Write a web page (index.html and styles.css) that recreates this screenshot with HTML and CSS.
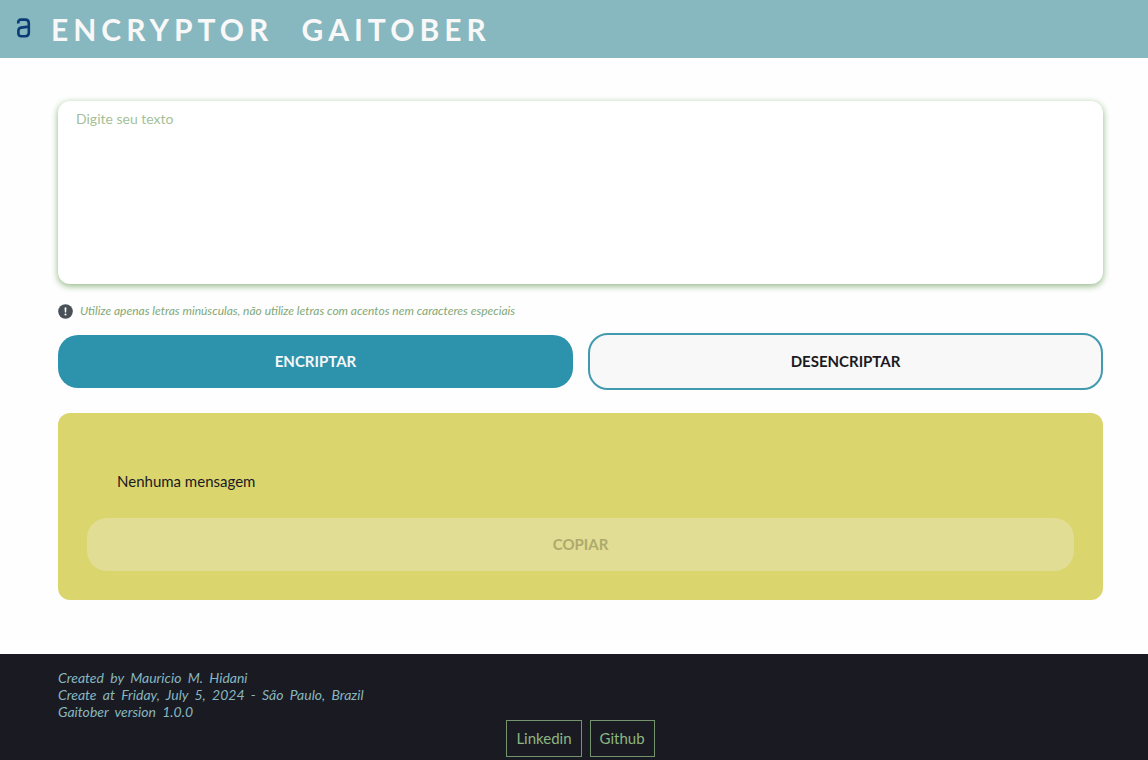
FILE: index.html
```html
<!DOCTYPE html>
<html lang="pt-BR">
<head>
<meta charset="utf-8">
<meta name="viewport" content="width=device-width, initial-scale=1">
<title>Encryptor Gaitober</title>
<link rel="stylesheet" href="styles.css">
</head>
<body class="page">
<header class="header">
  <svg class="logo" viewBox="0 0 15 20" aria-hidden="true"><path d="M2.2 5.6V4.6Q2.2 1.6 5.2 1.6H9.2Q12.8 1.6 12.8 5.2V14.8Q12.8 18.2 9.4 18.2H5.4Q2.4 18.2 2.4 15.4V12.8Q2.4 10 5.2 9.6L12.8 8.6"/></svg>
  <h1 class="title">ENCRYPTOR GAITOBER</h1>
</header>
<main class="main">
  <textarea class="message" aria-label="Digite seu texto" placeholder="Digite seu texto"></textarea>
  <p class="note">
    <svg class="note-icon" viewBox="0 0 16 16" aria-hidden="true"><circle cx="8" cy="8" r="7.8" fill="#495057"/><path d="M7 3.8H9L8.7 9H7.3Z" fill="#fff"/><circle cx="8" cy="11.2" r="1.1" fill="#fff"/></svg>
    Utilize apenas letras minúsculas, não utilize letras com acentos nem caracteres especiais
  </p>
  <div class="actions">
    <button class="button button-primary" type="button">ENCRIPTAR</button>
    <button class="button button-outline" type="button">DESENCRIPTAR</button>
  </div>
  <section class="result">
    <p class="result-text">Nenhuma mensagem</p>
    <button class="button button-copy" type="button" disabled>COPIAR</button>
  </section>
</main>
<footer class="footer">
  <p class="credits">Created by Mauricio M. Hidani<br>Create at Friday, July 5, 2024 - São Paulo, Brazil<br>Gaitober version 1.0.0</p>
  <nav class="links">
    <a class="link" href="#linkedin">Linkedin</a>
    <a class="link" href="#github">Github</a>
  </nav>
</footer>
</body>
</html>
```
FILE: styles.css
```css
* {
  box-sizing: border-box;
  margin: 0;
}

.page {
  display: flex;
  flex-direction: column;
  min-height: 100vh;
  background: #fefefe;
  color: #1a1a23;
  font-family: Lato, sans-serif;
  font-size: 15px;
}

.header {
  display: flex;
  align-items: center;
  gap: 20px;
  padding: 10px 16px;
  background: #87b7bf;
}

.logo {
  width: 15px;
  height: 20px;
  margin-bottom: 2px;
  fill: none;
  stroke: #0b3b75;
  stroke-width: 2.6;
  stroke-linejoin: round;
}

.title {
  color: #f8f8f8;
  font-size: 30px;
  line-height: 38px;
  letter-spacing: 5px;
  word-spacing: 16px;
}

.main {
  display: flex;
  flex: 1;
  flex-direction: column;
  padding: 43px 45px 54px 58px;
}

.message {
  display: block;
  width: 100%;
  height: 183px;
  padding: 9px 18px;
  border: 0;
  border-radius: 12px;
  background: #fff;
  box-shadow: 0 2px 7px #8db580;
  color: #1a1a23;
  font: 14px/18px Lato, sans-serif;
  resize: none;
}

.message::placeholder {
  color: #a4bf98;
  opacity: 1;
}

.note {
  display: flex;
  align-items: center;
  gap: 7px;
  margin: 18px 0 13px;
  color: #83a876;
  font-size: 12px;
  font-style: italic;
  line-height: 18px;
}

.note-icon {
  flex: none;
  width: 15px;
  height: 15px;
}

.actions {
  display: grid;
  grid-template-columns: 1fr 1fr;
  align-items: center;
  gap: 15px;
}

.button {
  padding: 18px;
  border: 0;
  border-radius: 20px;
  font: bold 15px/17px Lato, sans-serif;
}

.button-primary {
  background: #2d93ad;
  color: #f8f8f8;
}

.button-outline {
  border: 2px solid #419aae;
  background: #f8f8f8;
  color: #1a1a23;
}

.result {
  display: flex;
  flex-direction: column;
  margin-top: 23px;
  padding: 29px;
  border-radius: 12px;
  background: #dad56c;
}

.result-text {
  padding: 30px 30px 28px;
  line-height: 18px;
}

.button-copy {
  background: #e1dd94;
  color: #aeaa6c;
}

.footer {
  padding: 15px 45px 3px 58px;
  background: #1a1a23;
}

.credits {
  color: #87b7bf;
  font-size: 14px;
  font-style: italic;
  line-height: 17px;
  word-spacing: 3px;
}

.links {
  display: flex;
  justify-content: center;
  gap: 8px;
}

.link {
  padding: 9px;
  border: 1px solid #75946d;
  color: #8db580;
  line-height: 17px;
  text-decoration: none;
}
```
